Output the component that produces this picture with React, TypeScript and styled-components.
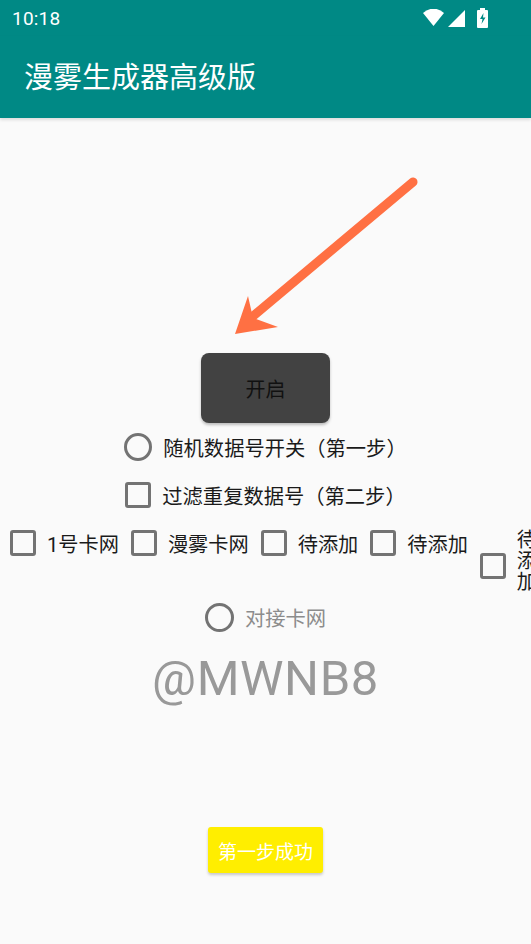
import React from 'react';
import styled, { createGlobalStyle } from 'styled-components';

const GlobalStyle = createGlobalStyle`
  html, body {
    margin: 0;
    padding: 0;
    background: #fafafa;
    overflow: hidden;
  }
  body {
    font-family: Roboto, "Noto Sans CJK SC", sans-serif;
  }
`;

const teal = '#008985';

const Page = styled.div`
  width: 531px;
  height: 944px;
  background: #fafafa;
  overflow: hidden;
`;

const StatusBar = styled.div`
  height: 36px;
  background: ${teal};
  display: flex;
  align-items: center;
  justify-content: space-between;
  padding: 0 41px 0 12px;
  color: #fff;
`;

const Clock = styled.span`
  font-size: 19px;
  font-family: Roboto, sans-serif;
  letter-spacing: 0.2px;
`;

const StatusIcons = styled.div`
  display: flex;
  align-items: center;
  gap: 4px;
`;

const AppBar = styled.div`
  height: 82px;
  background: ${teal};
  display: flex;
  align-items: center;
  padding: 0 24px 4px;
  box-sizing: border-box;
  box-shadow: 0 2px 3px rgba(0, 0, 0, 0.12);
  position: relative;
`;

const Title = styled.h1`
  margin: 0;
  font-weight: 400;
  font-size: 29px;
  color: #fff;
  font-family: "Noto Sans CJK SC", sans-serif;
`;

const Content = styled.div`
  display: flex;
  flex-direction: column;
  align-items: center;
`;

const ArrowArt = styled.svg`
  display: block;
  width: 531px;
  height: 235px;
`;

const StartButton = styled.button`
  width: 129px;
  height: 70px;
  border: none;
  border-radius: 8px;
  background: #424242;
  color: #111;
  font-size: 20px;
  font-family: "Noto Sans CJK SC", sans-serif;
  box-shadow: 0 2px 3px rgba(0, 0, 0, 0.25);
`;

const OptionRow = styled.div<{ $muted?: boolean }>`
  height: 48px;
  display: flex;
  align-items: center;
  gap: 11px;
  font-size: 20.3px;
  color: ${(p) => (p.$muted ? '#8c8c8c' : '#1a1a1a')};
  font-family: Roboto, "Noto Sans CJK SC", sans-serif;
`;

const Radio = styled.span<{ $size: number }>`
  width: ${(p) => p.$size}px;
  height: ${(p) => p.$size}px;
  box-sizing: border-box;
  border: 3px solid #737373;
  border-radius: 50%;
  flex: none;
`;

const Box = styled.span`
  width: 26px;
  height: 26px;
  box-sizing: border-box;
  border: 3px solid #737373;
  border-radius: 3px;
  flex: none;
`;

const ItemsRow = styled.div`
  align-self: stretch;
  height: 74px;
  overflow: hidden;
  display: flex;
  align-items: flex-start;
  gap: 12px;
  padding-left: 10px;
  white-space: nowrap;
`;

const Item = styled.div<{ $wrap?: boolean }>`
  display: flex;
  align-items: center;
  gap: 11px;
  height: ${(p) => (p.$wrap ? 'auto' : '48px')};
  padding-top: ${(p) => (p.$wrap ? 11 : 0)}px;
  font-size: 20.2px;
  color: #1a1a1a;
  flex: none;
`;

const ItemLabel = styled.span<{ $wrap?: boolean }>`
  font-family: Roboto, "Noto Sans CJK SC", sans-serif;
  ${(p) =>
    p.$wrap &&
    `
    width: 21px;
    white-space: normal;
    line-height: 21px;
    word-break: break-all;
  `}
`;

const WrapBox = styled(Box)`
  margin-top: 9px;
`;

const Handle = styled.div`
  margin-top: 8px;
  font-family: Roboto, sans-serif;
  font-size: 49px;
  line-height: 60px;
  color: #999;
  letter-spacing: 0.6px;
`;

const SuccessButton = styled.button`
  margin-top: 118px;
  width: 115px;
  height: 46px;
  border: none;
  border-radius: 3px;
  background: #ffee00;
  color: #fff;
  font-size: 19px;
  font-family: "Noto Sans CJK SC", sans-serif;
  padding: 0;
  box-shadow: 0 2px 3px rgba(0, 0, 0, 0.2);
`;

const items = ['1号卡网', '漫雾卡网', '待添加', '待添加'];

const App: React.FC = () => {
  return (
    <Page>
      <GlobalStyle />
      <StatusBar>
        <Clock>10:18</Clock>
        <StatusIcons>
          <svg width="21" height="18" viewBox="0 0 21 18">
            <path d="M0 4 A15 15 0 0 1 21 4 L10.5 17 Z" fill="#fff" />
          </svg>
          <svg width="17" height="17" viewBox="0 0 17 17">
            <path d="M17 0 L17 17 L0 17 Z" fill="#fff" />
          </svg>
          <svg width="14" height="20" viewBox="0 0 14 20" style={{ marginLeft: 7 }}>
            <rect x="4" y="0" width="5" height="3" fill="#fff" />
            <rect x="1" y="2" width="11" height="18" rx="1" fill="#fff" />
            <path d="M7.5 5 L4 11 L6.5 11 L5.5 16 L9.5 9.5 L7 9.5 Z" fill={teal} />
          </svg>
        </StatusIcons>
      </StatusBar>
      <AppBar>
        <Title>漫雾生成器高级版</Title>
      </AppBar>
      <Content>
        <ArrowArt viewBox="0 0 531 235">
          <line x1="413" y1="64" x2="252" y2="199" stroke="#ff7043" strokeWidth="9" strokeLinecap="round" />
          <path d="M235 216 L248 178 L253 200 L278 209 Z" fill="#ff7043" />
        </ArrowArt>
        <StartButton>开启</StartButton>
        <OptionRow>
          <Radio $size={28} />
          <span>随机数据号开关（第一步）</span>
        </OptionRow>
        <OptionRow>
          <Box />
          <span>过滤重复数据号（第二步）</span>
        </OptionRow>
        <ItemsRow>
          {items.map((label, i) => (
            <Item key={i}>
              <Box />
              <ItemLabel>{label}</ItemLabel>
            </Item>
          ))}
          <Item $wrap>
            <WrapBox />
            <ItemLabel $wrap>待添加</ItemLabel>
          </Item>
        </ItemsRow>
        <OptionRow $muted>
          <Radio $size={29} />
          <span>对接卡网</span>
        </OptionRow>
        <Handle>@MWNB8</Handle>
        <SuccessButton>第一步成功</SuccessButton>
      </Content>
    </Page>
  );
};

export default App;
